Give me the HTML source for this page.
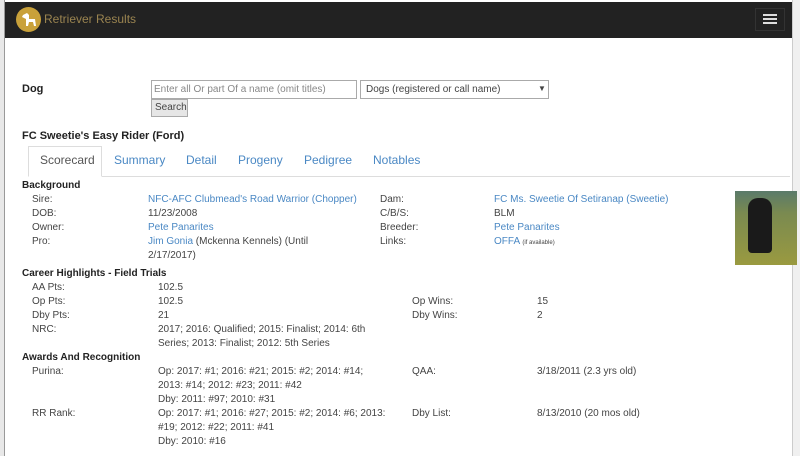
<!DOCTYPE html>
<html><head><style>
*{margin:0;padding:0;box-sizing:border-box}
body{width:800px;height:456px;overflow:hidden;background:#fff;font-family:"Liberation Sans",Arial,sans-serif;font-size:10px;color:#444;position:relative}
.a{position:absolute;white-space:nowrap;line-height:14px}
.b{font-weight:bold;color:#222}
.l{color:#4a88c4}
.c{position:absolute;left:0;top:2px;width:800px;height:456px}
</style></head><body>
<div style="position:absolute;left:0;top:0;width:5px;height:456px;background:#e8e8e8"></div>
<div style="position:absolute;left:4px;top:0;width:1px;height:456px;background:#999"></div>
<div style="position:absolute;left:792px;top:0;width:8px;height:456px;background:#f0f0f0;border-left:1px solid #ccc"></div>
<div style="position:absolute;left:5px;top:2px;width:787px;height:36px;background:#222"></div>
<div style="position:absolute;left:16px;top:7px;width:25px;height:25px;border-radius:50%;background:#c9a13a"></div>
<svg style="position:absolute;left:19px;top:11px" width="20" height="18" viewBox="0 0 20 18"><path d="M4 4 L8 2 L10 4 L10 8 L16 8 L17 15 L15 15 L14 11 L10 11 L9 15 L7 15 L7 8 L3 6 Z" fill="#fff"/></svg>
<div class="a" style="left:44px;top:12px;font-size:12px;color:#9a8450">Retriever Results</div>
<div style="position:absolute;left:755px;top:8px;width:30px;height:23px;border:1px solid #333"></div>
<div style="position:absolute;left:763px;top:14px;width:14px;height:2px;background:#ddd;box-shadow:0 4px 0 #ddd,0 8px 0 #ddd"></div>

<div class="a b" style="left:22px;top:82px;font-size:11px">Dog</div>
<div style="position:absolute;left:151px;top:80px;width:206px;height:19px;border:1px solid #aaa"></div>
<div class="a" style="left:154px;top:83px;color:#888;font-size:10px">Enter all Or part Of a name (omit titles)</div>
<div style="position:absolute;left:360px;top:80px;width:189px;height:19px;border:1px solid #aaa"></div>
<div class="a" style="left:366px;top:83px">Dogs (registered or call name)</div>
<div class="a" style="left:538px;top:82px;font-size:8px">▼</div>
<div style="position:absolute;left:151px;top:99px;width:37px;height:18px;border:1px solid #aaa;background:#e6e6e6"></div>
<div class="a" style="left:155px;top:101px">Search</div>

<div class="a b" style="left:22px;top:129px;font-size:11px">FC Sweetie's Easy Rider (Ford)</div>
<div style="position:absolute;left:28px;top:176px;width:762px;height:1px;background:#ddd"></div>
<div style="position:absolute;left:28px;top:146px;width:74px;height:31px;border:1px solid #ddd;border-bottom:1px solid #fff;background:#fff"></div>
<div class="a" style="left:40px;top:153px;font-size:12px;color:#555">Scorecard</div>
<div class="a l" style="left:114px;top:153px;font-size:12px">Summary</div>
<div class="a l" style="left:186px;top:153px;font-size:12px">Detail</div>
<div class="a l" style="left:238px;top:153px;font-size:12px">Progeny</div>
<div class="a l" style="left:304px;top:153px;font-size:12px">Pedigree</div>
<div class="a l" style="left:373px;top:153px;font-size:12px">Notables</div>

<div class="c">
<div class="a b" style="left:22px;top:177px">Background</div>
<div class="a" style="left:32px;top:191px">Sire:</div><div class="a l" style="left:148px;top:191px">NFC-AFC Clubmead's Road Warrior (Chopper)</div>
<div class="a" style="left:32px;top:205px">DOB:</div><div class="a" style="left:148px;top:205px">11/23/2008</div>
<div class="a" style="left:32px;top:219px">Owner:</div><div class="a l" style="left:148px;top:219px">Pete Panarites</div>
<div class="a" style="left:32px;top:233px">Pro:</div><div class="a" style="left:148px;top:233px"><span class="l">Jim Gonia</span> (Mckenna Kennels) (Until</div>
<div class="a" style="left:148px;top:247px">2/17/2017)</div>
<div class="a" style="left:380px;top:191px">Dam:</div><div class="a l" style="left:494px;top:191px">FC Ms. Sweetie Of Setiranap (Sweetie)</div>
<div class="a" style="left:380px;top:205px">C/B/S:</div><div class="a" style="left:494px;top:205px">BLM</div>
<div class="a" style="left:380px;top:219px">Breeder:</div><div class="a l" style="left:494px;top:219px">Pete Panarites</div>
<div class="a" style="left:380px;top:233px">Links:</div><div class="a" style="left:494px;top:233px"><span class="l">OFFA</span> <span style="font-size:6px">(if available)</span></div>

<div class="a b" style="left:22px;top:265px">Career Highlights - Field Trials</div>
<div class="a" style="left:32px;top:279px">AA Pts:</div><div class="a" style="left:158px;top:279px">102.5</div>
<div class="a" style="left:32px;top:293px">Op Pts:</div><div class="a" style="left:158px;top:293px">102.5</div>
<div class="a" style="left:32px;top:307px">Dby Pts:</div><div class="a" style="left:158px;top:307px">21</div>
<div class="a" style="left:412px;top:293px">Op Wins:</div><div class="a" style="left:537px;top:293px">15</div>
<div class="a" style="left:412px;top:307px">Dby Wins:</div><div class="a" style="left:537px;top:307px">2</div>
<div class="a" style="left:32px;top:321px">NRC:</div><div class="a" style="left:158px;top:321px">2017; 2016: Qualified; 2015: Finalist; 2014: 6th</div>
<div class="a" style="left:158px;top:335px">Series; 2013: Finalist; 2012: 5th Series</div>

<div class="a b" style="left:22px;top:349px">Awards And Recognition</div>
<div class="a" style="left:32px;top:363px">Purina:</div><div class="a" style="left:158px;top:363px">Op: 2017: #1; 2016: #21; 2015: #2; 2014: #14;</div>
<div class="a" style="left:158px;top:377px">2013: #14; 2012: #23; 2011: #42</div>
<div class="a" style="left:158px;top:391px">Dby: 2011: #97; 2010: #31</div>
<div class="a" style="left:412px;top:363px">QAA:</div><div class="a" style="left:537px;top:363px">3/18/2011 (2.3 yrs old)</div>
<div class="a" style="left:32px;top:405px">RR Rank:</div><div class="a" style="left:158px;top:405px">Op: 2017: #1; 2016: #27; 2015: #2; 2014: #6; 2013:</div>
<div class="a" style="left:158px;top:419px">#19; 2012: #22; 2011: #41</div>
<div class="a" style="left:158px;top:433px">Dby: 2010: #16</div>
<div class="a" style="left:412px;top:405px">Dby List:</div><div class="a" style="left:537px;top:405px">8/13/2010 (20 mos old)</div>
</div>
<div style="position:absolute;left:735px;top:191px;width:62px;height:74px;background:linear-gradient(#5a7a6a 0%,#7a8a50 30%,#9a9a40 100%)"></div>
<div style="position:absolute;left:748px;top:198px;width:24px;height:55px;border-radius:10px 10px 4px 4px;background:#1a1a1a"></div>
</body></html>
